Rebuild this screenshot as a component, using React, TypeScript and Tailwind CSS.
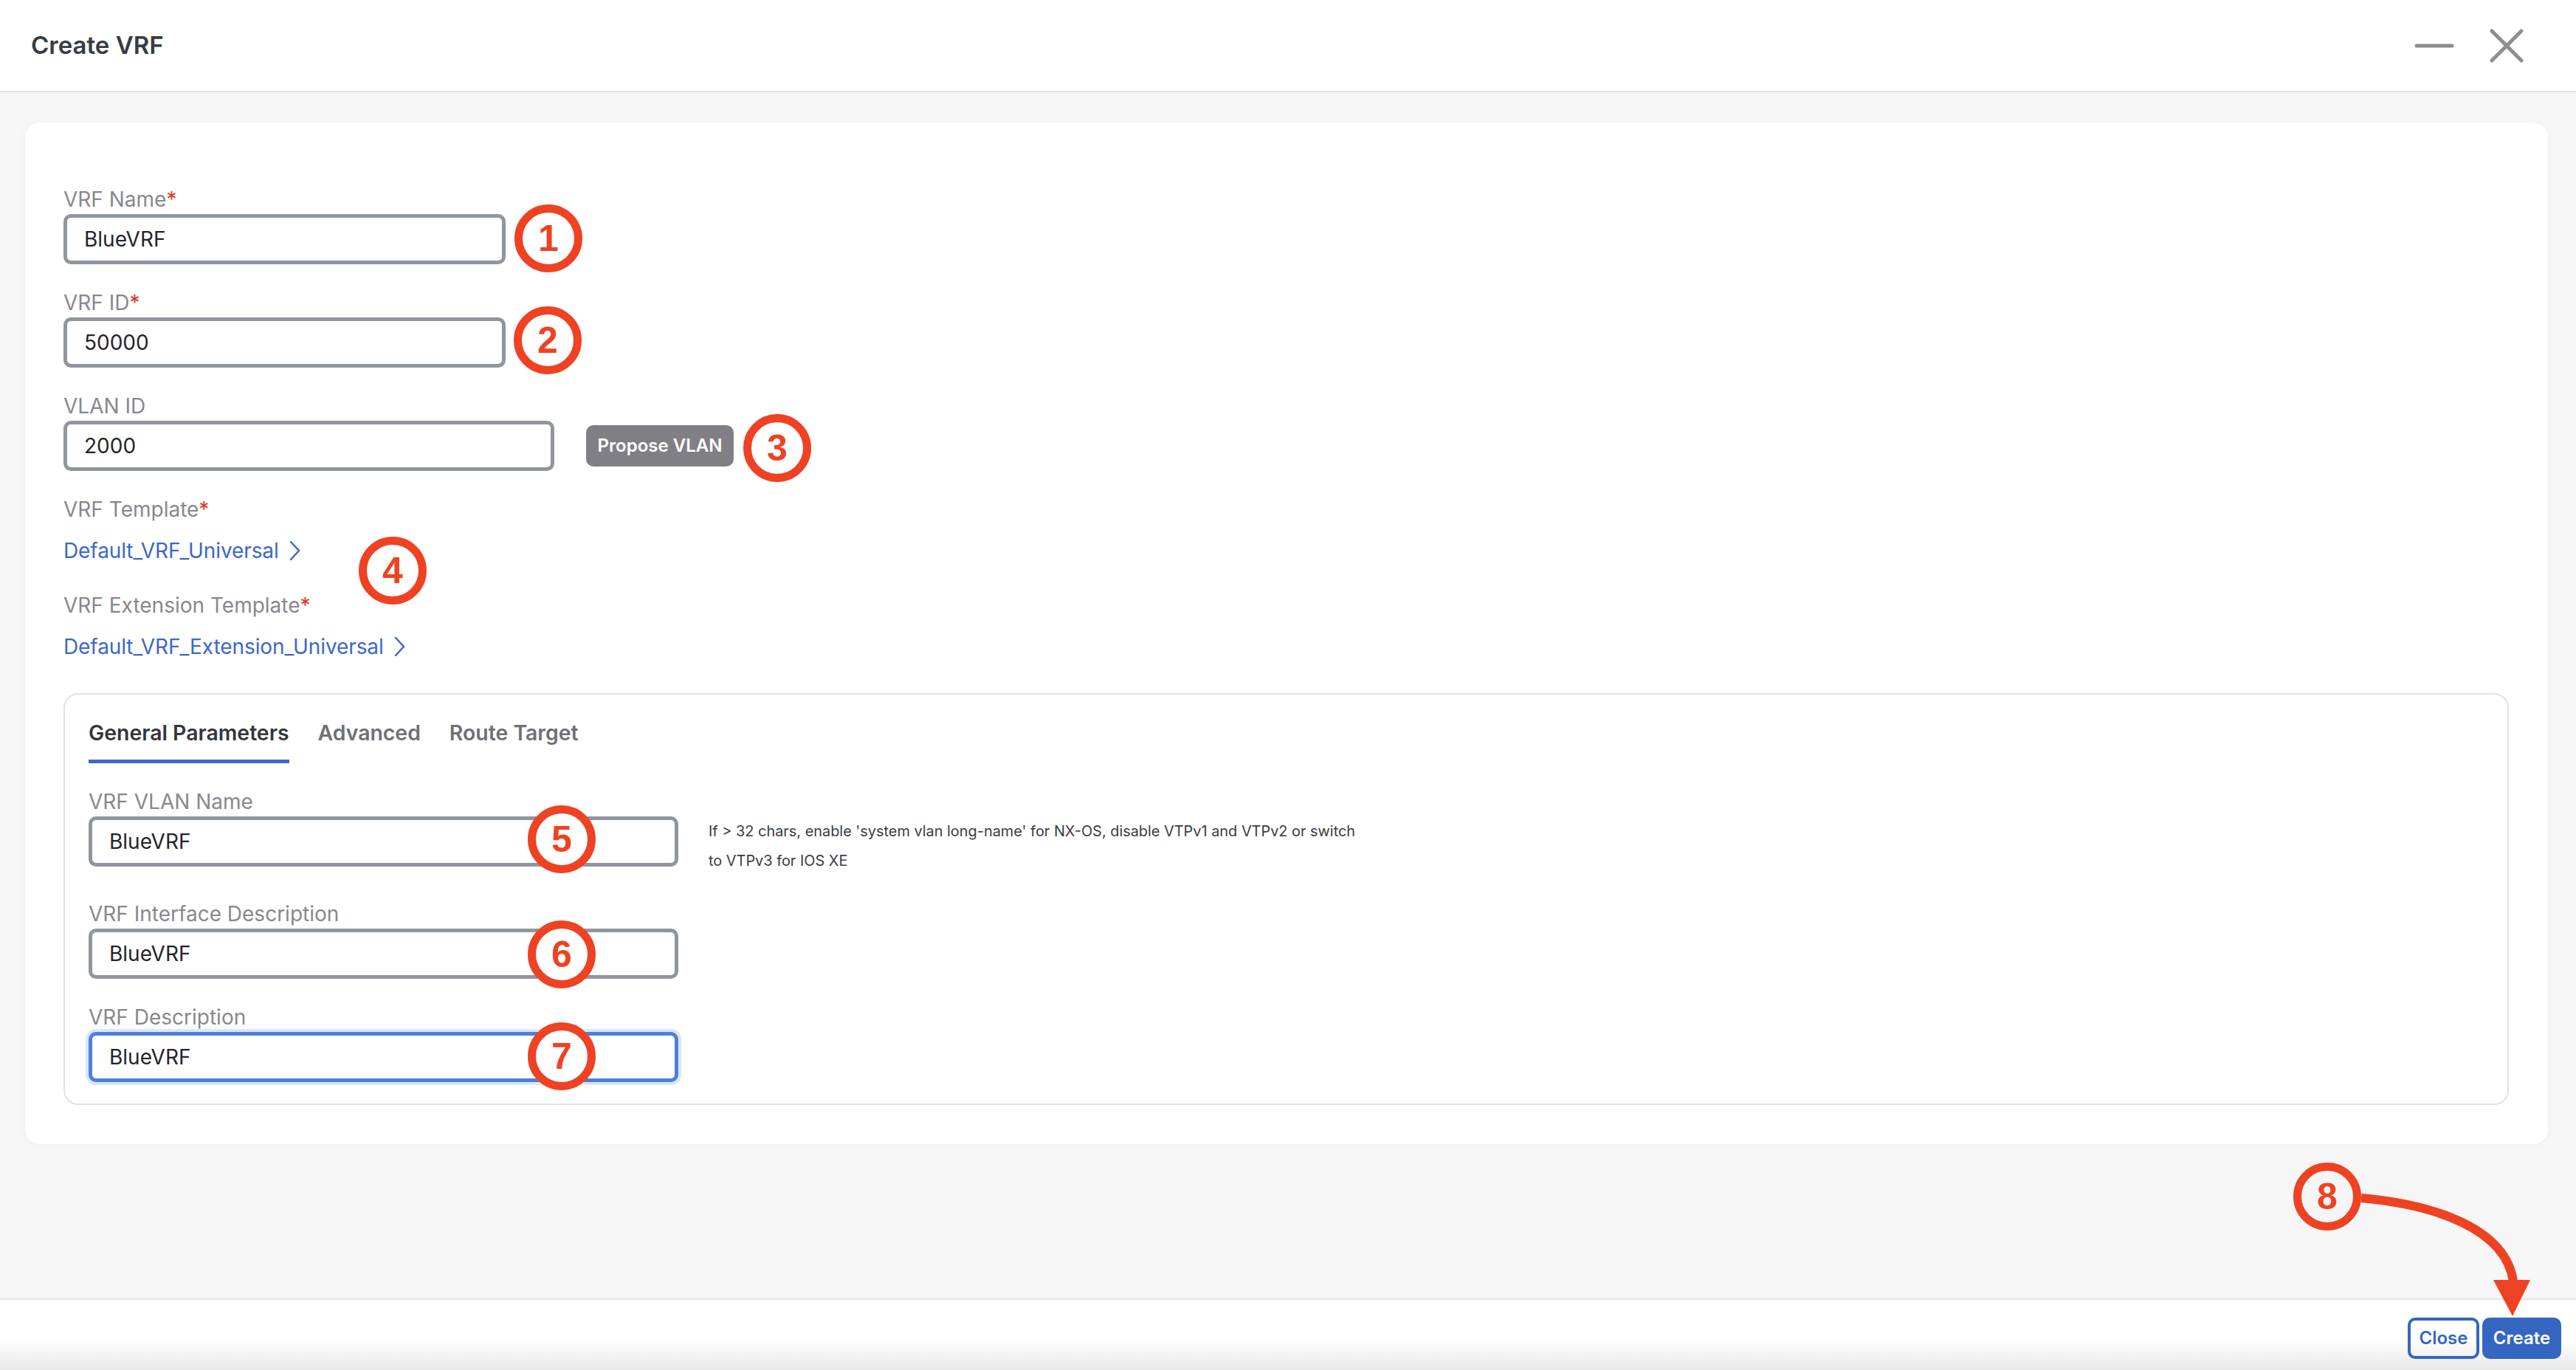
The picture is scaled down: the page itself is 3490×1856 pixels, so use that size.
import { FC, ReactElement, ReactNode } from 'react';

interface IFieldProps {
  label: string;
  value: string;
  required?: boolean;
  className?: string;
  inputClassName?: string;
}

const Label: FC<{ text: string; required?: boolean }> = ({ text, required }): ReactElement => (
  <div className="h-10 text-[28px] leading-10 text-[#88888c]">
    {text}
    {required && <span className="text-[#e0342b]">*</span>}
  </div>
);

const Field: FC<IFieldProps> = ({ label, value, required, className, inputClassName }): ReactElement => (
  <div className={className}>
    <Label text={label} required={required} />
    <div
      className={`flex h-[68px] items-center rounded-[10px] border-[5px] bg-white pl-[23px] text-[28px] text-[#23252b] ${
        inputClassName ?? 'border-[#90959f]'
      }`}
    >
      {value}
    </div>
  </div>
);

const TemplateLink: FC<{ text: string }> = ({ text }): ReactElement => (
  <div className="mt-2.5 flex h-[52px] items-center gap-[14px] text-[28px] tracking-[-0.1px] text-[#3b68cb]">
    <span>{text}</span>
    <svg width="15" height="28" viewBox="0 0 15 28" fill="none" stroke="#3b68cb" strokeWidth="2.5" strokeLinecap="round">
      <path d="M2 2 L13 14 L2 26" />
    </svg>
  </div>
);

const Marker: FC<{ className: string; children: ReactNode }> = ({ className, children }): ReactElement => (
  <div
    className={`absolute flex size-[92px] items-center justify-center rounded-full border-[11px] border-[#ee4223] font-['Liberation_Sans',sans-serif] text-[50px] font-bold text-[#ee4223] ${className}`}
  >
    {children}
  </div>
);

const App: FC = (): ReactElement => {
  return (
    <div className="relative flex h-[1856px] w-[3490px] flex-col overflow-hidden bg-[#f6f6f6] font-['Inter',sans-serif]">
      <header className="flex h-[125px] shrink-0 items-center justify-between border-b-[2px] border-[#e2e2e2] bg-white pl-[42px] pr-[71px]">
        <h1 className="text-[33px] font-semibold text-[#373c42]">Create VRF</h1>
        <div className="flex items-center gap-[48px]">
          <svg width="54" height="6" viewBox="0 0 54 6" stroke="#8e8e8e" strokeWidth="5" strokeLinecap="round">
            <path d="M3 3 H51" />
          </svg>
          <svg width="46" height="46" viewBox="0 0 46 46" stroke="#8e8e8e" strokeWidth="5" strokeLinecap="round">
            <path d="M3 3 L43 43 M43 3 L3 43" />
          </svg>
        </div>
      </header>

      <main className="flex-1 px-[38px] pt-[41px]">
        <div className="ml-[-4px] h-[1384px] w-[3418px] rounded-[20px] bg-white pl-[52px] pr-[53px] pt-[84px] shadow-[0_0_12px_rgba(0,0,0,0.03)]">
          <Field label="VRF Name" value="BlueVRF" required className="w-[599px]" />
          <Field label="VRF ID" value="50000" required className="mt-8 w-[599px]" />
          <div className="mt-8 flex items-end">
            <Field label="VLAN ID" value="2000" className="w-[665px]" />
            <button className="mb-[6px] ml-[43px] h-[56px] w-[200px] rounded-[10px] bg-[#808084] text-[24px] font-semibold text-white">
              Propose VLAN
            </button>
          </div>

          <div className="mt-8">
            <Label text="VRF Template" required />
            <TemplateLink text="Default_VRF_Universal" />
          </div>
          <div className="mt-7">
            <Label text="VRF Extension Template" required />
            <TemplateLink text="Default_VRF_Extension_Universal" />
          </div>

          <section className="mt-[37px] h-[558px] rounded-[20px] border-[2px] border-[#e2e2e2] pl-[32px]">
            <div className="flex gap-[39px] text-[28.4px] font-semibold leading-10 text-[#6f7074]">
              <div className="border-b-[5px] border-[#3f68c8] pb-4 pt-[32px] text-[#33363b]">General Parameters</div>
              <div className="pt-[32px]">Advanced</div>
              <div className="pt-[32px]">Route Target</div>
            </div>
            <div className="mt-8 flex items-end">
              <Field label="VRF VLAN Name" value="BlueVRF" className="mb-3 w-[799px]" />
              <p className="ml-[41px] w-[900px] text-[19.9px] leading-10 text-[#3a3c42]">
                If &gt; 32 chars, enable 'system vlan long-name' for NX-OS, disable VTPv1 and VTPv2 or switch
                <br />
                to VTPv3 for IOS XE
              </p>
            </div>
            <Field label="VRF Interface Description" value="BlueVRF" className="mt-8 w-[799px]" />
            <Field
              label="VRF Description"
              value="BlueVRF"
              className="mt-8 w-[799px]"
              inputClassName="border-[#4f7fdd] shadow-[0_0_0_4px_#dde6f6]"
            />
          </section>
        </div>
      </main>

      <footer className="flex h-[97px] shrink-0 justify-end gap-1 border-t-[2px] border-[#e4e4e4] bg-[linear-gradient(to_bottom,#ffffff_0%,#ffffff_55%,#e8e8e8_100%)] pr-5 pt-[24px]">
        <button className="h-[56px] w-[97px] rounded-[10px] border-[4px] border-[#3566c2] text-[24px] font-semibold text-[#3566c2]">
          Close
        </button>
        <button className="h-[56px] w-[107px] rounded-[10px] bg-[#3566c2] text-[24px] font-semibold text-white">
          Create
        </button>
      </footer>

      {/* callouts drawn over the screenshot */}
      <Marker className="left-[697px] top-[277px] bg-white">1</Marker>
      <Marker className="left-[696px] top-[415px] bg-white">2</Marker>
      <Marker className="left-[1007px] top-[561px] bg-white">3</Marker>
      <Marker className="left-[486px] top-[727px] bg-white">4</Marker>
      <Marker className="left-[715px] top-[1091px] bg-white">5</Marker>
      <Marker className="left-[715px] top-[1247px] bg-white">6</Marker>
      <Marker className="left-[715px] top-[1385px] bg-white">7</Marker>
      <Marker className="left-[3107px] top-[1575px] bg-[#f6f6f6]">8</Marker>
      <svg className="absolute left-[3190px] top-[1610px]" width="250" height="180" viewBox="0 0 250 180" fill="none">
        <path d="M9 13 C110 22 205 55 215 126" stroke="#ee4223" strokeWidth="12" />
        <path d="M188 124 L238 124 L214 173 Z" fill="#ee4223" />
      </svg>
    </div>
  );
};

export default App;
